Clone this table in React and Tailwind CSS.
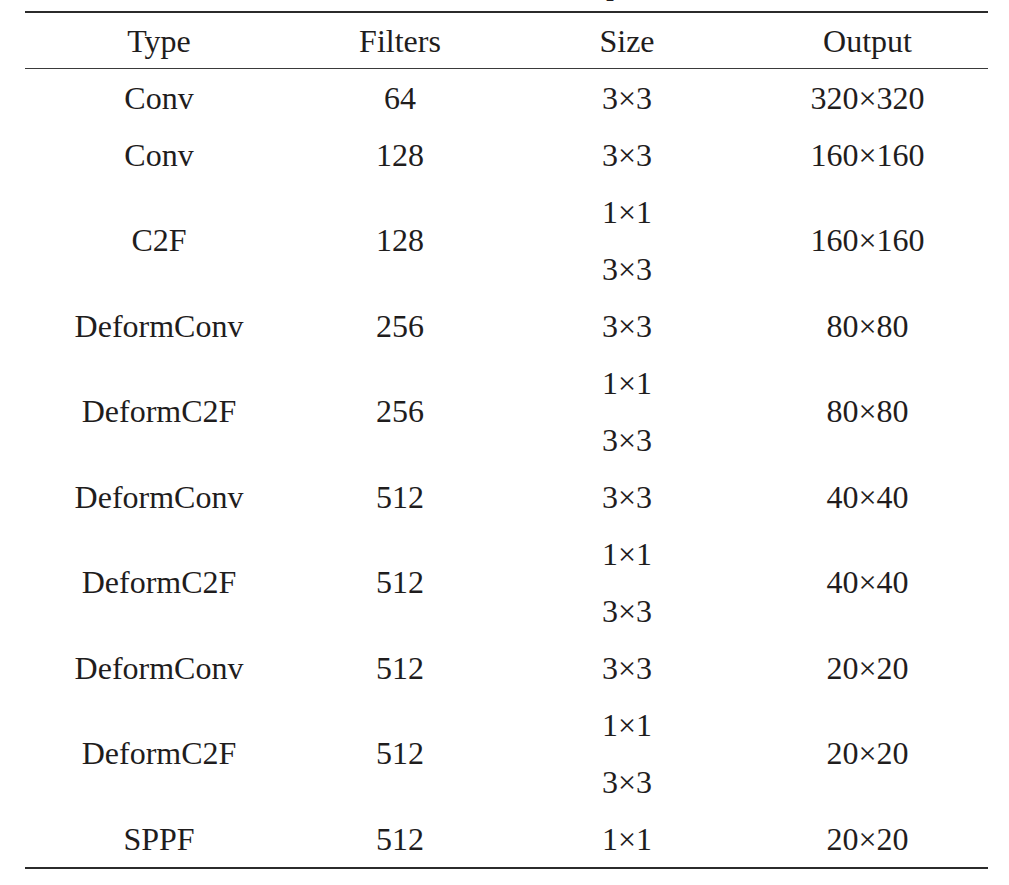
import React from "react";

const rows = [
  { type: "Conv", filters: "64", size: ["3×3"], output: "320×320" },
  { type: "Conv", filters: "128", size: ["3×3"], output: "160×160" },
  { type: "C2F", filters: "128", size: ["1×1", "3×3"], output: "160×160" },
  { type: "DeformConv", filters: "256", size: ["3×3"], output: "80×80" },
  { type: "DeformC2F", filters: "256", size: ["1×1", "3×3"], output: "80×80" },
  { type: "DeformConv", filters: "512", size: ["3×3"], output: "40×40" },
  { type: "DeformC2F", filters: "512", size: ["1×1", "3×3"], output: "40×40" },
  { type: "DeformConv", filters: "512", size: ["3×3"], output: "20×20" },
  { type: "DeformC2F", filters: "512", size: ["1×1", "3×3"], output: "20×20" },
  { type: "SPPF", filters: "512", size: ["1×1"], output: "20×20" },
];

const cols = "grid grid-cols-[268px_214px_240px_241px] items-center text-center";

const App = () => {
  return (
    <div className="font-serif">
      <div className="bg-white w-[1009px] h-[885px] [font-family:'Liberation_Serif',serif] text-[32px] leading-none text-[#1f1d1d]">
        {/* caption above is cropped, only the foot of one letter shows */}
        <div className="relative h-[11px] overflow-hidden">
          <span className="absolute left-[606px] top-[-33px] leading-[32px] text-[32px]">p</span>
        </div>
        <div className="ml-[25px] w-[963px] border-t-2 border-b-2 border-[#2b2b2b]">
          <div className={`${cols} h-[56px] border-b border-[#3a3a3a]`}>
            <div>Type</div>
            <div>Filters</div>
            <div>Size</div>
            <div>Output</div>
          </div>
          {rows.map((r, i) => (
            <div key={i} className={cols}>
              <div>{r.type}</div>
              <div>{r.filters}</div>
              <div className="flex flex-col">
                {r.size.map((s, j) => (
                  <div key={j} className="h-[57px] flex items-center justify-center">
                    {s}
                  </div>
                ))}
              </div>
              <div>{r.output}</div>
            </div>
          ))}
        </div>
      </div>
    </div>
  );
};

export default App;
